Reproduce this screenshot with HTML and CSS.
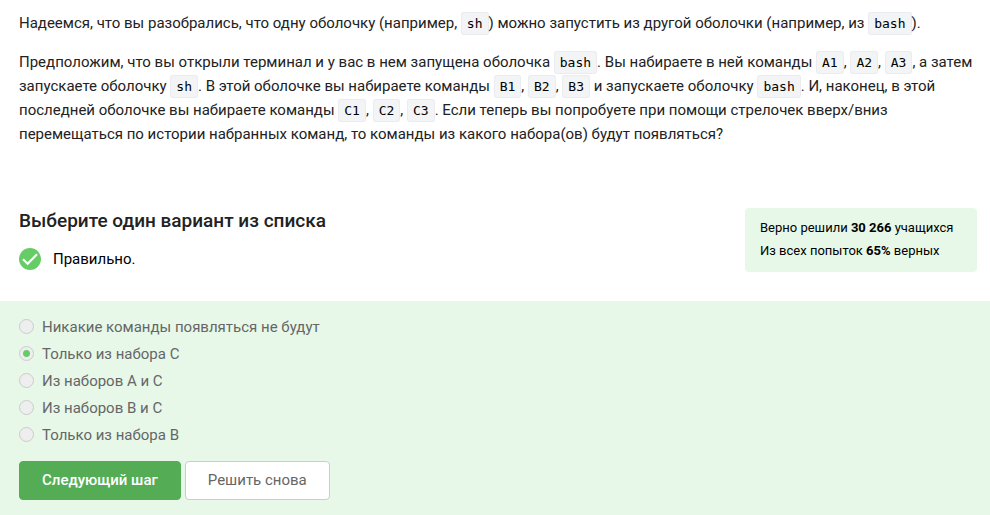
FILE: index.html
```html
<!DOCTYPE html>
<html lang="ru">
<head>
<meta charset="utf-8">
<title>Выберите один вариант из списка</title>
<link rel="stylesheet" href="styles.css">
</head>
<body>
<main>
<section class="statement">
<p>Надеемся, что вы разобрались, что одну оболочку (например, <code>sh</code>) можно запустить из другой оболочки (например, из <code>bash</code>).</p>
<p>Предположим, что вы открыли терминал и у вас в нем запущена оболочка <code>bash</code>. Вы набираете в ней команды <code>A1</code>, <code>A2</code>, <code>A3</code>, а затем запускаете оболочку <code>sh</code>. В этой оболочке вы набираете команды <code>B1</code>, <code>B2</code>, <code>B3</code> и запускаете оболочку <code>bash</code>. И, наконец, в этой последней оболочке вы набираете команды <code>C1</code>, <code>C2</code>, <code>C3</code>. Если теперь вы попробуете при помощи стрелочек вверх/вниз перемещаться по истории набранных команд, то команды из какого набора(ов) будут появляться?</p>
</section>
<section class="summary">
<div>
<h1 id="question">Выберите один вариант из списка</h1>
<p class="verdict">
<svg class="check" viewBox="0 0 22 22" aria-hidden="true"><circle cx="11" cy="11" r="11" fill="#66cc66"/><path d="M4 11.200l4.700 4.500L18 6.300" fill="none" stroke="#fff" stroke-width="2.200"/></svg>
<span>Правильно.</span>
</p>
</div>
<div class="stats">
<p>Верно решили <b>30 266</b> учащихся</p>
<p>Из всех попыток <b>65%</b> верных</p>
</div>
</section>
<form class="quiz">
<div class="options" role="radiogroup" aria-labelledby="question">
<label><input type="radio" name="answer">Никакие команды появляться не будут</label>
<label><input type="radio" name="answer" checked>Только из набора C</label>
<label><input type="radio" name="answer">Из наборов A и C</label>
<label><input type="radio" name="answer">Из наборов B и C</label>
<label><input type="radio" name="answer">Только из набора B</label>
</div>
<div class="actions">
<button type="button" class="primary">Следующий шаг</button>
<button type="button">Решить снова</button>
</div>
</form>
</main>
</body>
</html>
```
FILE: styles.css
```css
* {
  box-sizing: border-box;
}

body {
  margin: 0;
  background: #fff;
  color: #222;
  font: 15px/24px Roboto, sans-serif;
}

p,
h1 {
  margin: 0;
}

.statement {
  padding: 11px 13px 0 19px;
}

.statement p + p {
  margin-top: 15px;
}

code {
  padding: 3px 5px;
  border: 1px solid #eaecf0;
  border-radius: 3px;
  background: #f3f4f6;
  color: #000;
  font: 13px/16px "DejaVu Sans Mono", monospace;
}

.summary {
  display: flex;
  justify-content: space-between;
  align-items: flex-start;
  padding: 62px 13px 29px 19px;
}

h1 {
  font-size: 19px;
  line-height: 26px;
  font-weight: 500;
}

.verdict {
  display: flex;
  align-items: center;
  gap: 12px;
  margin-top: 13px;
  color: #000;
}

.check {
  width: 22px;
  height: 22px;
}

.stats {
  min-width: 232px;
  padding: 8px 15px 10px;
  border-radius: 4px;
  background: #e7f8e9;
  color: #000;
  font-size: 13px;
  line-height: 23px;
}

.quiz {
  padding: 12px 19px 15px;
  background: #e7f8e9;
}

.options label {
  display: flex;
  align-items: center;
  gap: 8px;
  height: 27px;
  color: #666;
}

.options input {
  appearance: none;
  width: 15px;
  height: 15px;
  margin: 0;
  border: 1px solid #ccc;
  border-radius: 50%;
  background: #eee;
}

.options input:checked {
  background: radial-gradient(circle, #66cc66 3px, #eee 4px);
}

.actions {
  display: flex;
  gap: 4px;
  margin-top: 13px;
}

button {
  padding: 7px 22px;
  border: 1px solid #ccc;
  border-radius: 4px;
  background: #fff;
  color: #666;
  font: 15px/23px Roboto, sans-serif;
}

.primary {
  border-color: #54ad54;
  background: #54ad54;
  color: #fff;
  font-weight: 500;
}
```
